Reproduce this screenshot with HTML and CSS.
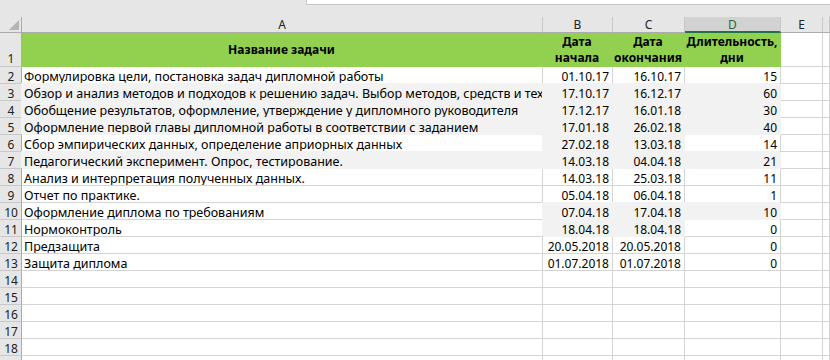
FILE: index.html
```html
<!DOCTYPE html>
<html lang="ru">
<head>
<meta charset="utf-8">
<title>Задачи дипломной работы</title>
<link rel="stylesheet" href="styles.css">
</head>
<body>
<div class="app">
  <div class="topbar"><div class="formula"></div></div>
  <div class="sheet">
    <div class="corner"></div>
    <div class="colh">A</div>
    <div class="colh">B</div>
    <div class="colh">C</div>
    <div class="colh sel">D</div>
    <div class="colh">E</div>
    <div class="colh"></div>

    <div class="rowh bottom">1</div>
    <div class="c green head">Название задачи</div>
    <div class="c green head">Дата<br>начала</div>
    <div class="c green head">Дата<br>окончания</div>
    <div class="c green head">Длительность,<br>дни</div>
    <div class="c"></div>
    <div class="c"></div>

    <div class="rowh">2</div>
    <div class="c task">Формулировка цели, постановка задач дипломной работы</div>
    <div class="c num">01.10.17</div>
    <div class="c num">16.10.17</div>
    <div class="c num">15</div>
    <div class="c"></div>
    <div class="c"></div>

    <div class="rowh">3</div>
    <div class="c task fill">Обзор и анализ методов и подходов к решению задач. Выбор методов, средств и технологий решения</div>
    <div class="c num fill">17.10.17</div>
    <div class="c num fill">16.12.17</div>
    <div class="c num fill">60</div>
    <div class="c"></div>
    <div class="c"></div>

    <div class="rowh">4</div>
    <div class="c task fill">Обобщение результатов, оформление, утверждение у дипломного руководителя</div>
    <div class="c num fill">17.12.17</div>
    <div class="c num fill">16.01.18</div>
    <div class="c num fill">30</div>
    <div class="c"></div>
    <div class="c"></div>

    <div class="rowh">5</div>
    <div class="c task fill">Оформление первой главы дипломной работы в соответствии с заданием</div>
    <div class="c num fill">17.01.18</div>
    <div class="c num fill">26.02.18</div>
    <div class="c num fill">40</div>
    <div class="c"></div>
    <div class="c"></div>

    <div class="rowh">6</div>
    <div class="c task">Сбор эмпирических данных, определение априорных данных</div>
    <div class="c num fill">27.02.18</div>
    <div class="c num fill">13.03.18</div>
    <div class="c num">14</div>
    <div class="c"></div>
    <div class="c"></div>

    <div class="rowh">7</div>
    <div class="c task fill">Педагогический эксперимент. Опрос, тестирование.</div>
    <div class="c num fill">14.03.18</div>
    <div class="c num fill">04.04.18</div>
    <div class="c num fill">21</div>
    <div class="c"></div>
    <div class="c"></div>

    <div class="rowh">8</div>
    <div class="c task">Анализ и интерпретация полученных данных.</div>
    <div class="c num">14.03.18</div>
    <div class="c num">25.03.18</div>
    <div class="c num">11</div>
    <div class="c"></div>
    <div class="c"></div>

    <div class="rowh">9</div>
    <div class="c task">Отчет по практике.</div>
    <div class="c num">05.04.18</div>
    <div class="c num">06.04.18</div>
    <div class="c num">1</div>
    <div class="c"></div>
    <div class="c"></div>

    <div class="rowh">10</div>
    <div class="c task">Оформление диплома по требованиям</div>
    <div class="c num fill">07.04.18</div>
    <div class="c num fill">17.04.18</div>
    <div class="c num fill">10</div>
    <div class="c"></div>
    <div class="c"></div>

    <div class="rowh">11</div>
    <div class="c task">Нормоконтроль</div>
    <div class="c num fill">18.04.18</div>
    <div class="c num fill">18.04.18</div>
    <div class="c num">0</div>
    <div class="c"></div>
    <div class="c"></div>

    <div class="rowh">12</div>
    <div class="c task">Предзащита</div>
    <div class="c num">20.05.2018</div>
    <div class="c num">20.05.2018</div>
    <div class="c num">0</div>
    <div class="c"></div>
    <div class="c"></div>

    <div class="rowh">13</div>
    <div class="c task">Защита диплома</div>
    <div class="c num">01.07.2018</div>
    <div class="c num">01.07.2018</div>
    <div class="c num">0</div>
    <div class="c"></div>
    <div class="c"></div>

    <div class="rowh">14</div>
    <div class="c"></div><div class="c"></div><div class="c"></div><div class="c"></div><div class="c"></div><div class="c"></div>
    <div class="rowh">15</div>
    <div class="c"></div><div class="c"></div><div class="c"></div><div class="c"></div><div class="c"></div><div class="c"></div>
    <div class="rowh">16</div>
    <div class="c"></div><div class="c"></div><div class="c"></div><div class="c"></div><div class="c"></div><div class="c"></div>
    <div class="rowh">17</div>
    <div class="c"></div><div class="c"></div><div class="c"></div><div class="c"></div><div class="c"></div><div class="c"></div>
    <div class="rowh">18</div>
    <div class="c"></div><div class="c"></div><div class="c"></div><div class="c"></div><div class="c"></div><div class="c"></div>
    <div class="rowh">19</div>
    <div class="c"></div><div class="c"></div><div class="c"></div><div class="c"></div><div class="c"></div><div class="c"></div>
  </div>
</div>
</body>
</html>
```
FILE: styles.css
```css
html, body {
  margin: 0;
  padding: 0;
  overflow: hidden;
  background: #ffffff;
}

.app {
  width: 830px;
  height: 360px;
  overflow: hidden;
  font-family: "Noto Sans", "DejaVu Sans", sans-serif;
  font-size: 12.5px;
  color: #000;
}

.topbar {
  height: 17px;
  background: #e6e6e6;
  box-sizing: border-box;
}

.formula {
  margin-left: 306px;
  height: 5px;
  box-sizing: border-box;
  background: #ffffff;
  border-left: 1px solid #c6c6c6;
  border-bottom: 1px solid #c6c6c6;
}

.sheet {
  display: grid;
  grid-template-columns: 22px 521px 70px 72px 96px 42px 1fr;
  grid-template-rows: 16px 34px;
  grid-auto-rows: 17px;
}

.sheet > div {
  box-sizing: border-box;
  white-space: nowrap;
  overflow: hidden;
  line-height: 15px;
  padding-top: 2px;
}

.corner {
  background: #e6e6e6;
  border-right: 1px solid #ababab;
  border-bottom: 1px solid #ababab;
  display: flex;
  justify-content: flex-end;
  align-items: flex-end;
  padding: 0 2px 2px 0;
}

.corner::after {
  content: "";
  width: 10px;
  height: 10px;
  background: #b4b4b4;
  clip-path: polygon(100% 0, 100% 100%, 0 100%);
}

.sheet > .colh {
  background: #e6e6e6;
  border-right: 1px solid #c8c8c8;
  border-bottom: 1px solid #ababab;
  text-align: center;
  color: #222;
  font-size: 12px;
  line-height: 14px;
  padding-top: 1px;
  overflow: visible;
}

.sheet > .colh.sel {
  background: #d2d2d2;
  color: #1e6b42;
  border-bottom: 2px solid #217346;
  line-height: 13px;
}

.rowh {
  background: #e6e6e6;
  border-right: 1px solid #ababab;
  border-bottom: 1px solid #c8c8c8;
  text-align: center;
  color: #222;
  font-size: 12px;
  padding-left: 1px;
}

.rowh.bottom {
  display: flex;
  align-items: flex-end;
  justify-content: center;
}

.c {
  border-right: 1px solid #d4d4d4;
  border-bottom: 1px solid #d4d4d4;
  padding-right: 3px;
  padding-left: 2px;
}

.task {
  padding-right: 0;
}

.num {
  text-align: right;
  font-size: 12px;
}

.fill {
  background: #f2f2f2;
  border-color: #f2f2f2;
  box-shadow: -1px -1px 0 #f2f2f2;
}

.green {
  background: #92d050;
  border-color: #92d050;
}

.sheet > .head {
  font-size: 12px;
  font-weight: 700;
  line-height: 16px;
  padding-top: 1px;
  text-align: center;
  white-space: normal;
  display: flex;
  align-items: center;
  justify-content: center;
}
```
